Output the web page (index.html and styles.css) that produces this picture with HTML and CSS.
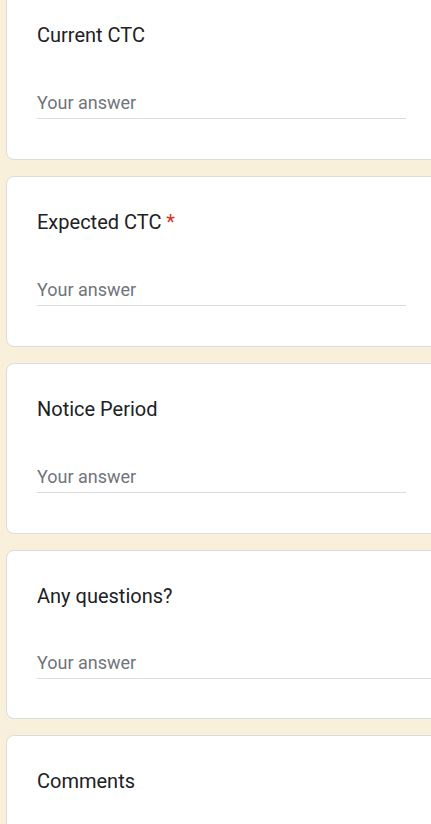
FILE: index.html
```html
<!DOCTYPE html>
<html lang="en">
<head>
<meta charset="utf-8">
<title>Form</title>
<link rel="stylesheet" href="styles.css">
</head>
<body>
<div class="form">
  <div class="card">
    <div class="title">Current CTC</div>
    <div class="answer short">Your answer</div>
  </div>
  <div class="card">
    <div class="title">Expected CTC <span class="req">*</span></div>
    <div class="answer short">Your answer</div>
  </div>
  <div class="card">
    <div class="title">Notice Period</div>
    <div class="answer short">Your answer</div>
  </div>
  <div class="card card-long">
    <div class="title">Any questions?</div>
    <div class="answer long">Your answer</div>
  </div>
  <div class="card">
    <div class="title">Comments</div>
  </div>
</div>
</body>
</html>
```
FILE: styles.css
```css
html, body {
  margin: 0;
  padding: 0;
  overflow: hidden;
  background: #f9f0db;
  height: 100%;
}
body {
  font-family: Roboto, "Noto Sans", Arial, sans-serif;
  color: #202124;
}
.form {
  display: flex;
  flex-direction: column;
  gap: 16px;
  padding-left: 6px;
  margin-top: -11px;
  width: 700px;
}
.card {
  background: #fff;
  border: 1px solid #dadce0;
  border-radius: 8px;
  padding: 33px 0 40px 30px;
  height: 96px;
  flex: none;
}
.card-long {
  height: 94px;
}
.title {
  font-size: 20px;
  line-height: 24px;
  letter-spacing: 0;
  font-weight: 400;
}
.req {
  color: #d93025;
}
.answer {
  margin-top: 44px;
  font-size: 18px;
  line-height: 24px;
  color: #70757a;
  padding-bottom: 3px;
  border-bottom: 1px solid #dadce0;
}
.answer.short {
  width: 369px;
}
.card-long .answer {
  margin-top: 43px;
  padding-bottom: 3px;
}
```
